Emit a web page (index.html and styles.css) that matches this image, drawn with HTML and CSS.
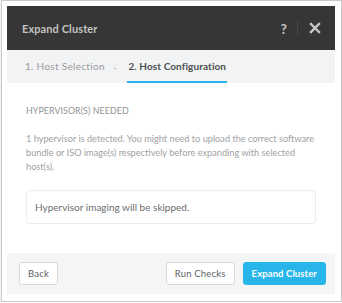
FILE: index.html
```html
<!DOCTYPE html>
<html>
<head lang="en">
    <meta charset="UTF-8">
    <title>Expand Cluster</title>
    <link rel="stylesheet" href="styles.css">
</head>
<body>
<div class="frame">
    <div class="modal">
        <div class="modal_header">
            <span class="modal_title">Expand Cluster</span>
            <div class="modal_actions">
                <span class="help">?</span>
                <span class="divider"></span>
                <span class="close">
                    <svg width="12" height="12" viewBox="0 0 12 12">
                        <path d="M2 2L10 10M10 2L2 10" stroke="#c8c8c8" stroke-width="2.4" stroke-linecap="square"/>
                    </svg>
                </span>
            </div>
        </div>
        <div class="steps">
            <span class="step">1. Host Selection</span>
            <span class="step_sep">&middot;</span>
            <span class="step active">2. Host Configuration</span>
        </div>
        <div class="modal_body">
            <div class="section_title">HYPERVISOR(S) NEEDED</div>
            <p class="note">1 hypervisor is detected. You might need to upload the correct software bundle or ISO image(s) respectively before expanding with selected host(s).</p>
            <div class="info_box">Hypervisor imaging will be skipped.</div>
        </div>
        <div class="modal_footer">
            <button class="btn">Back</button>
            <div class="footer_right">
                <button class="btn">Run Checks</button>
                <button class="btn primary">Expand Cluster</button>
            </div>
        </div>
    </div>
</div>
</body>
</html>
```

FILE: styles.css
```css
html, body {
    margin: 0;
    padding: 0;
    background: #fff;
}
body {
    font-family: "Lato", "Open Sans", sans-serif;
}
.frame {
    box-sizing: border-box;
    width: 341px;
    height: 302px;
    margin: 0 0 0 1px;
    border: 1px solid #c9c9c9;
    padding: 5px 5px 0 5px;
    box-shadow: 0 1px 2px rgba(0,0,0,0.15);
}
.modal {
    width: 328px;
    height: 288px;
    display: flex;
    flex-direction: column;
    background: #fff;
}
.modal_header {
    height: 44px;
    background: #353635;
    display: flex;
    align-items: center;
    justify-content: space-between;
    padding: 0 14px 0 15px;
    flex-shrink: 0;
}
.modal_title {
    color: #c2c3c2;
    font-size: 11px;
    font-weight: bold;
    letter-spacing: 0.1px;
    padding-top: 1px;
}
.modal_actions {
    display: flex;
    align-items: center;
    height: 100%;
}
.help {
    color: #bdbdbd;
    font-size: 14px;
    font-weight: 900;
    margin-right: 10px;
}
.divider {
    width: 1px;
    height: 16px;
    background: #444544;
    margin-right: 11px;
}
.close {
    display: flex;
}
.steps {
    height: 33px;
    background: #f2f3f4;
    display: flex;
    align-items: stretch;
    padding-left: 18px;
    flex-shrink: 0;
}
.step {
    font-size: 10px;
    color: #9a9c9e;
    letter-spacing: 0.3px;
    display: flex;
    align-items: center;
    padding-top: 1px;
    border-bottom: 2px solid transparent;
}
.step.active {
    color: #4d4f51;
    font-weight: bold;
    letter-spacing: 0.1px;
    border-bottom-color: #27b5ea;
    padding: 1px 1px 0 1px;
}
.step_sep {
    color: #aaa;
    font-size: 10px;
    display: flex;
    align-items: center;
    margin: 0 11px 0 9px;
}
.modal_body {
    flex: 1;
    padding: 22px 19px 0 19px;
}
.section_title {
    font-size: 8.8px;
    color: #8f9193;
    letter-spacing: 0.1px;
}
.note {
    margin: 16px 0 0 0;
    font-size: 9.2px;
    line-height: 14px;
    color: #9fa1a3;
}
.info_box {
    margin-top: 16px;
    border: 1px solid #ececec;
    border-radius: 3px;
    padding: 10px 8px;
    font-size: 10px;
    color: #6c6e70;
}
.modal_footer {
    height: 41px;
    background: #f4f5f5;
    display: flex;
    align-items: center;
    justify-content: space-between;
    padding: 0 9px 0 12px;
    flex-shrink: 0;
}
.footer_right {
    display: flex;
    gap: 8px;
}
.btn {
    height: 23px;
    padding: 0 8px;
    border: 1px solid #d8d9da;
    border-radius: 3px;
    background: #fff;
    font-family: inherit;
    font-size: 9.5px;
    color: #606264;
    letter-spacing: 0.2px;
    cursor: pointer;
}
.btn.primary {
    background: #27b5ea;
    border-color: #27b5ea;
    color: #fff;
    font-weight: bold;
    letter-spacing: 0.1px;
    padding: 0 8px;
}
```
